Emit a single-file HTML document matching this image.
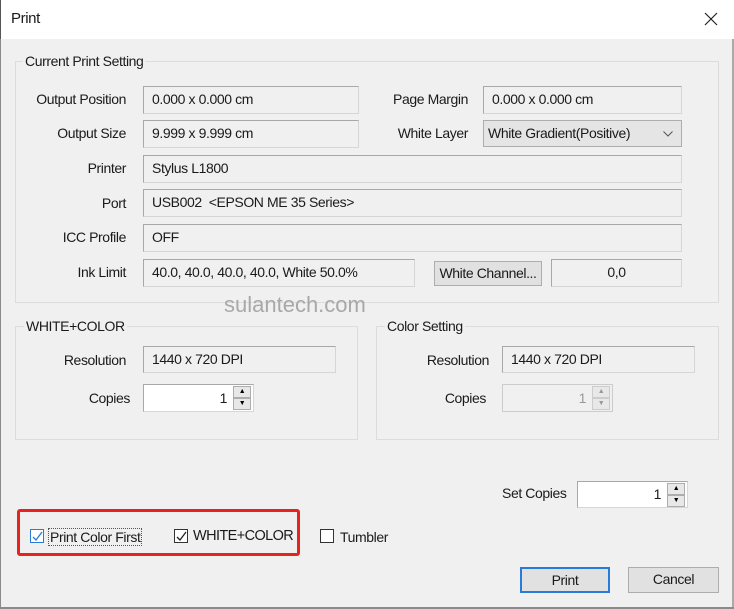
<!DOCTYPE html>
<html><head><style>
*{box-sizing:border-box;margin:0;padding:0}
body{width:734px;height:609px;overflow:hidden;background:#f0f0f0;font-family:"Liberation Sans",Arial,sans-serif;font-size:14px;color:#1a1a1a;position:relative;letter-spacing:-0.4px}
.a{position:absolute}
.title{left:0;top:0;width:734px;height:39px;background:#fff;border-left:1px solid #555;}
.grp{border:1px solid #dcdcdc;}
.gl{background:#f0f0f0;padding:0 2px;}
.lbl{text-align:right;}
.f{border:1px solid #d6d6d6;border-top-color:#a8a8a8;border-left-color:#a8a8a8;background:#f0f0f0;padding:5px 8px;line-height:15px}
.w{background:#fff;border:1px solid #a8a8a8;border-bottom-color:#d6d6d6;border-right-color:#d6d6d6}
.btn{border:1px solid #adadad;background:#e1e1e1;text-align:center;line-height:23px}
.spin{width:18px;height:12px;border:1px solid #adadad;background:#e8e8e8;font-size:7px;text-align:center;line-height:10px;color:#000}
.cb{width:14px;height:14px;border:1px solid #333;background:#fff;}
</style></head><body>
<div class="a title"></div>
<div class="a" style="left:11px;top:10px;font-size:15px">Print</div>
<svg class="a" style="left:704px;top:12px" width="14" height="14"><path d="M1 1L13 13M13 1L1 13" stroke="#222" stroke-width="1.2"/></svg>
<div class="a" style="left:0;top:39px;width:1px;height:570px;background:#8a8a8a"></div>
<div class="a" style="left:732px;top:39px;width:2px;height:570px;background:#aaa"></div>
<div class="a" style="left:0;top:607px;width:734px;height:2px;background:#8a8a8a"></div>

<div class="a grp" style="left:15px;top:61px;width:704px;height:242px"></div>
<div class="a gl" style="left:23px;top:53px">Current Print Setting</div>

<div class="a lbl" style="left:20px;top:91px;width:106px">Output Position</div>
<div class="a f" style="left:143px;top:86px;width:216px;height:28px">0.000 x 0.000 cm</div>
<div class="a lbl" style="left:20px;top:125px;width:106px">Output Size</div>
<div class="a f" style="left:143px;top:120px;width:216px;height:28px">9.999 x 9.999 cm</div>
<div class="a lbl" style="left:370px;top:91px;width:98px">Page Margin</div>
<div class="a f" style="left:483px;top:86px;width:199px;height:28px">0.000 x 0.000 cm</div>
<div class="a lbl" style="left:370px;top:125px;width:98px">White Layer</div>
<div class="a" style="left:483px;top:120px;width:199px;height:27px;border:1px solid #adadad;background:#e5e5e5;padding:5px 4px;line-height:15px">White Gradient(Positive)<svg class="a" style="right:8px;top:10px" width="10" height="6"><path d="M0.5 0.5L5 5L9.5 0.5" fill="none" stroke="#555"/></svg></div>
<div class="a lbl" style="left:20px;top:160px;width:106px">Printer</div>
<div class="a f" style="left:143px;top:155px;width:539px;height:28px">Stylus L1800</div>
<div class="a lbl" style="left:20px;top:195px;width:106px">Port</div>
<div class="a f" style="left:143px;top:189px;width:539px;height:28px">USB002 &nbsp;&lt;EPSON ME 35 Series&gt;</div>
<div class="a lbl" style="left:20px;top:229px;width:106px">ICC Profile</div>
<div class="a f" style="left:143px;top:224px;width:539px;height:28px">OFF</div>
<div class="a lbl" style="left:20px;top:264px;width:106px">Ink Limit</div>
<div class="a f" style="left:143px;top:259px;width:272px;height:28px">40.0, 40.0, 40.0, 40.0, White 50.0%</div>
<div class="a btn" style="left:434px;top:261px;width:108px;height:25px">White Channel...</div>
<div class="a f" style="left:551px;top:259px;width:131px;height:28px;text-align:center">0,0</div>

<div class="a" style="left:224px;top:292px;font-size:22px;color:#a8a8a8;letter-spacing:0">sulantech.com</div>

<div class="a grp" style="left:15px;top:326px;width:343px;height:114px"></div>
<div class="a gl" style="left:24px;top:318px">WHITE+COLOR</div>
<div class="a lbl" style="left:20px;top:352px;width:106px">Resolution</div>
<div class="a f" style="left:143px;top:346px;width:193px;height:27px">1440 x 720 DPI</div>
<div class="a lbl" style="left:20px;top:390px;width:110px">Copies</div>
<div class="a w" style="left:143px;top:384px;width:111px;height:28px"><span class="a" style="right:26px;top:5px">1</span><div class="a spin" style="right:2px;top:1px">▲</div><div class="a spin" style="right:2px;top:13px">▼</div></div>

<div class="a grp" style="left:376px;top:326px;width:343px;height:114px"></div>
<div class="a gl" style="left:385px;top:318px">Color Setting</div>
<div class="a lbl" style="left:380px;top:352px;width:109px">Resolution</div>
<div class="a f" style="left:502px;top:346px;width:193px;height:27px">1440 x 720 DPI</div>
<div class="a lbl" style="left:380px;top:390px;width:106px">Copies</div>
<div class="a" style="left:502px;top:384px;width:111px;height:28px;border:1px solid #ccc;background:#f0f0f0;color:#999"><span class="a" style="right:26px;top:5px">1</span><div class="a spin" style="right:2px;top:1px;color:#999;border-color:#ccc">▲</div><div class="a spin" style="right:2px;top:13px;color:#999;border-color:#ccc">▼</div></div>

<div class="a" style="left:502px;top:485px">Set Copies</div>
<div class="a w" style="left:577px;top:481px;width:111px;height:27px"><span class="a" style="right:26px;top:4px">1</span><div class="a spin" style="right:2px;top:1px">▲</div><div class="a spin" style="right:2px;top:13px">▼</div></div>

<div class="a" style="left:17px;top:509px;width:283px;height:47px;border:3px solid #e8231d;border-radius:3px"></div>
<div class="a cb" style="left:30px;top:529px;border-color:#2a7ad8"><svg class="a" style="left:1px;top:1px" width="11" height="11"><path d="M1 6L4 9L10 1" fill="none" stroke="#2a7ad8" stroke-width="1.3"/></svg></div>
<div class="a" style="left:48px;top:528px;border:1px dotted #555;padding:0 1px">Print Color First</div>
<div class="a cb" style="left:174px;top:529px"><svg class="a" style="left:1px;top:1px" width="11" height="11"><path d="M1 6L4 9L10 1" fill="none" stroke="#222" stroke-width="1.3"/></svg></div>
<div class="a" style="left:193px;top:528px;font-size:14.5px;letter-spacing:-0.6px">WHITE+COLOR</div>
<div class="a cb" style="left:320px;top:529px"></div>
<div class="a" style="left:340px;top:529px">Tumbler</div>

<div class="a btn" style="left:520px;top:567px;width:90px;height:26px;border:2px solid #2a7ad8">Print</div>
<div class="a btn" style="left:628px;top:567px;width:91px;height:26px">Cancel</div>
</body></html>
